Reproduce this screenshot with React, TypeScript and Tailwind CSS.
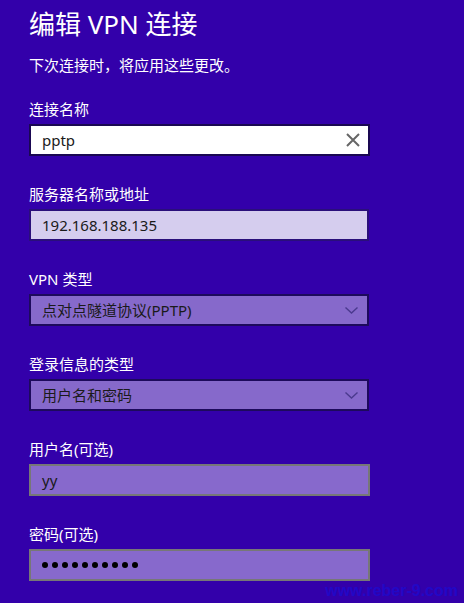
import React from 'react';

const font = { fontFamily: '"Noto Sans", "Noto Sans CJK SC", sans-serif' };

const Label: React.FC<{ text: string }> = ({ text }) => (
    <div className="h-[20px] text-[15px] leading-[20px] text-white">{text}</div>
);

const Chevron = () => (
    <svg width="13" height="7" viewBox="0 0 13 7" className="mr-[9px]">
        <path d="M0.5 0.5 L6.5 6 L12.5 0.5" fill="none" stroke="#4b3a8e" strokeWidth="1.4" />
    </svg>
);

const Select: React.FC<{ value: string }> = ({ value }) => (
    <div className="mt-[5px] flex h-[32px] w-[340px] items-center justify-between border-2 border-[#1d0a5c] bg-[#8669cb] pl-[11px]">
        <span className="text-[15px] text-[#1a1a1a]">{value}</span>
        <Chevron />
    </div>
);

export default function App() {
    return (
        <div className="h-[603px] w-[464px] overflow-hidden bg-[#3300aa] pl-[29px]" style={font}>
            <h1 className="pt-[7px] text-[26px] leading-[34px] font-normal text-white">编辑 VPN 连接</h1>
            <p className="mt-[14px] text-[15px] leading-[20px] text-white">下次连接时，将应用这些更改。</p>

            <div className="mt-[24px] flex flex-col gap-[28px]">
                <div>
                    <Label text="连接名称" />
                    <div className="mt-[5px] flex h-[32px] w-[341px] items-center justify-between border-2 border-[#1a0852] bg-white pl-[11px]">
                        <span className="text-[15px] text-[#1a1a1a]">pptp</span>
                        <svg width="14" height="14" viewBox="0 0 14 14" className="mr-[8px]">
                            <path d="M1 1 L13 13 M13 1 L1 13" stroke="#666" strokeWidth="2" />
                        </svg>
                    </div>
                </div>

                <div>
                    <Label text="服务器名称或地址" />
                    <div className="mt-[5px] flex h-[32px] w-[340px] items-center border-2 border-[#2a0f7a] bg-[#d5cdee] pl-[11px]">
                        <span className="text-[15px] text-[#1a1a1a]">192.168.188.135</span>
                    </div>
                </div>

                <div>
                    <Label text="VPN 类型" />
                    <Select value="点对点隧道协议(PPTP)" />
                </div>

                <div>
                    <Label text="登录信息的类型" />
                    <Select value="用户名和密码" />
                </div>

                <div>
                    <Label text="用户名(可选)" />
                    <div className="mt-[5px] flex h-[32px] w-[341px] items-center border-2 border-[#777777] bg-[#8769cc] pl-[11px]">
                        <span className="text-[15px] text-[#1a1a1a]">yy</span>
                    </div>
                </div>

                <div>
                    <Label text="密码(可选)" />
                    <div className="mt-[5px] flex h-[32px] w-[341px] items-center gap-[4px] border-2 border-[#777777] bg-[#8769cc] pl-[11px]">
                        {Array.from({ length: 10 }).map((_, i) => (
                            <span key={i} className="h-[6px] w-[6px] rounded-full bg-black" />
                        ))}
                    </div>
                </div>
            </div>

            <div className="mt-[1px] flex justify-end pr-[6px]">
                <span className="text-[16px] leading-[18px] font-bold text-[#2208c6]" style={{ fontFamily: '"Liberation Sans", sans-serif' }}>
                    www.reber-9.com
                </span>
            </div>
        </div>
    );
}
